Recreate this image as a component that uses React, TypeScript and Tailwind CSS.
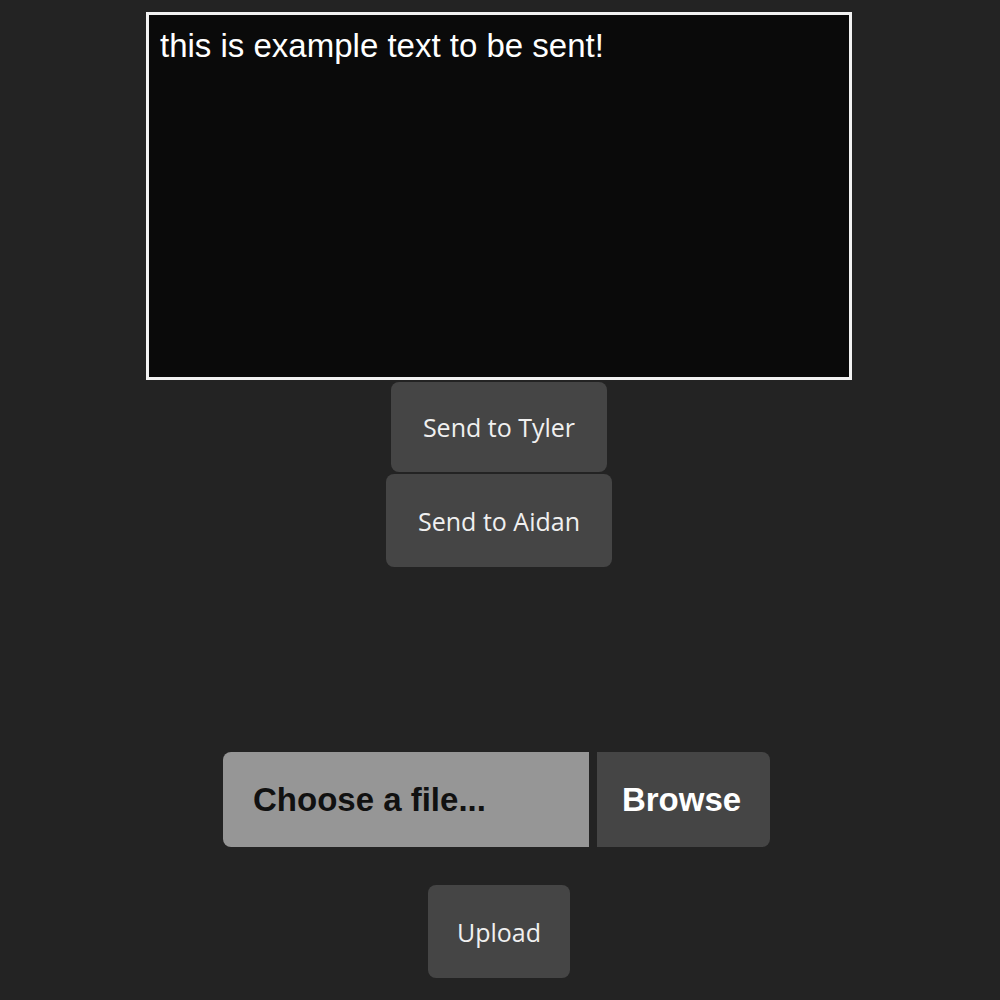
import React from "react";

export default function App() {
  return (
    <div className="min-h-[1000px] w-[1000px] bg-[#232323] flex flex-col items-center pt-[12px]">
      <textarea
        defaultValue="this is example text to be sent!"
        className="w-[706px] h-[368px] ml-[-2px] bg-[#0a0a0a] border-[3px] border-[#f2f2f2] text-white font-['Liberation_Sans',Arial,sans-serif] text-[33px] leading-[1.15] px-[11px] pt-[12px] resize-none outline-none"
      />
      <button className="mt-[2px] ml-[-2px] w-[216px] h-[90px] rounded-[8px] bg-[#454545] text-[#f0f0f0] font-['Open_Sans',sans-serif] text-[25px] pt-[2px]">
        Send to Tyler
      </button>
      <button className="mt-[2px] ml-[-2px] w-[226px] h-[93px] rounded-[8px] bg-[#454545] text-[#f0f0f0] font-['Open_Sans',sans-serif] text-[25px] pt-[2px]">
        Send to Aidan
      </button>
      <div className="mt-[185px] ml-[-7px] flex gap-[8px] h-[95px] font-['Liberation_Sans',Arial,sans-serif]">
        <div className="w-[366px] bg-[#969696] rounded-l-[8px] flex items-center pl-[30px] text-[33px] font-bold text-[#111]">
          Choose a file...
        </div>
        <div className="w-[173px] bg-[#454545] rounded-r-[8px] flex items-center justify-center pr-[4px] text-[33px] font-bold text-white">
          Browse
        </div>
      </div>
      <button className="mt-[38px] ml-[-2px] w-[142px] h-[93px] rounded-[8px] bg-[#454545] text-[#f0f0f0] font-['Open_Sans',sans-serif] text-[25px] pt-[2px]">
        Upload
      </button>
    </div>
  );
}
